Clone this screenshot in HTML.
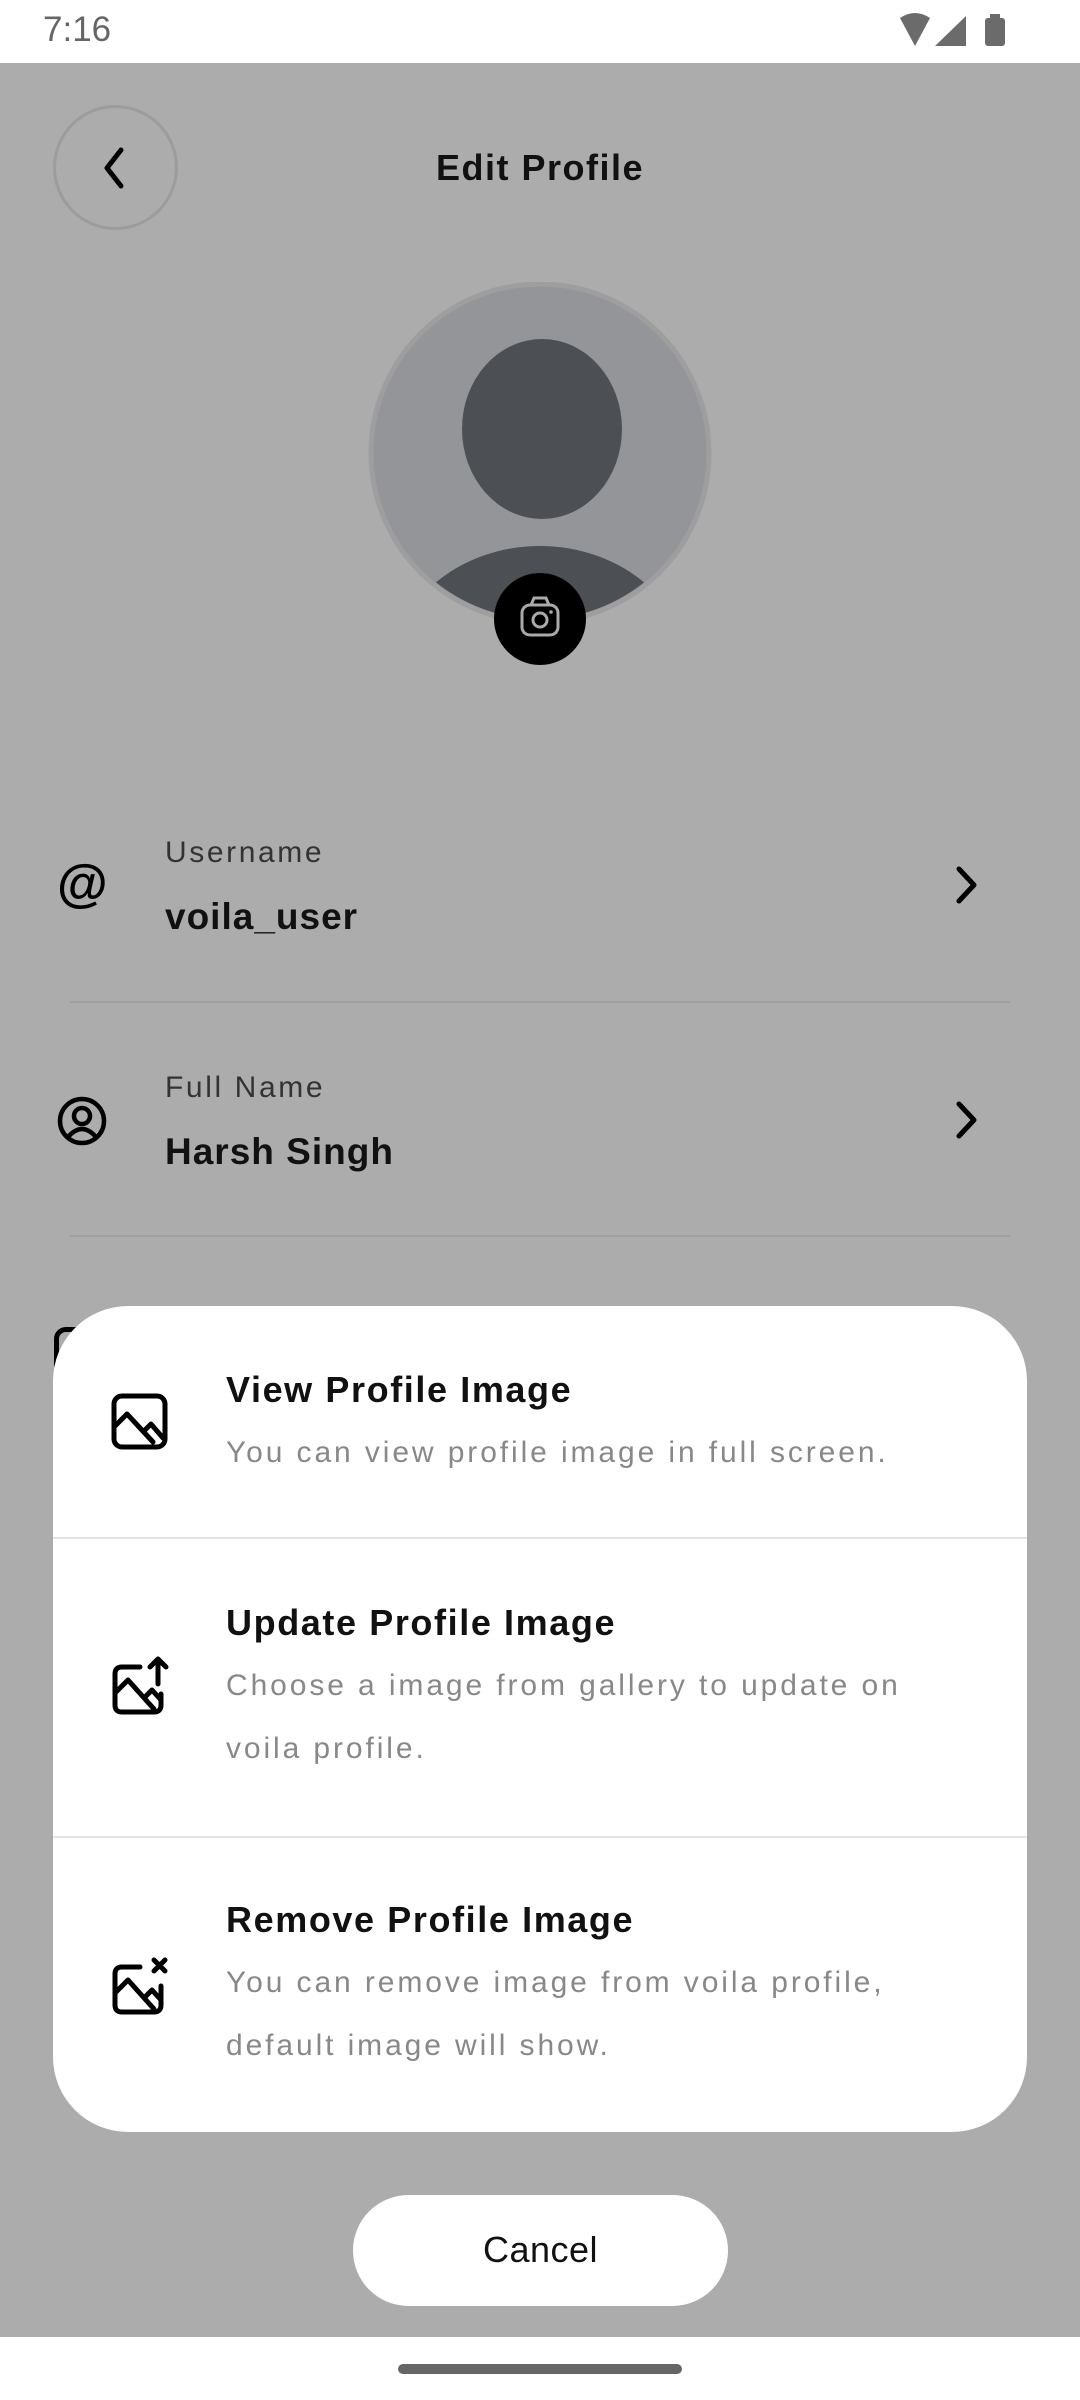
<!DOCTYPE html>
<html><head><meta charset="utf-8">
<style>
*{margin:0;padding:0;box-sizing:border-box}
html,body{width:1080px;height:2400px;overflow:hidden;background:#fff;font-family:"Liberation Sans",sans-serif}
.abs{position:absolute}
.t{position:absolute;white-space:nowrap}
.ti{font-size:36px;line-height:40px;color:#111;letter-spacing:1.6px;font-weight:bold}
.de{font-size:30px;line-height:34px;color:#888;letter-spacing:2.9px}
</style></head>
<body>
<div class="abs" style="left:0;top:0;width:1080px;height:63px;background:#fff"></div>
<div class="t" style="left:43px;top:11px;font-size:35px;color:#666;line-height:38px">7:16</div>
<svg class="abs" style="left:898px;top:12px" width="112" height="38" viewBox="0 0 112 38">
<path d="M2 6 Q17 -4 32 6 L17 34 Z" fill="#6b6b6b"/>
<path d="M68 4 L68 34 L37 34 Z" fill="#6b6b6b"/>
<rect x="87" y="6" width="20" height="28" rx="3" fill="#6b6b6b"/><rect x="92" y="2" width="10" height="5" fill="#6b6b6b"/>
</svg>

<div class="abs" style="left:0;top:63px;width:1080px;height:2274px;background:#acacac"></div>

<div class="abs" style="left:53px;top:105px;width:125px;height:125px;border-radius:50%;border:3px solid #9c9c9c"></div>
<svg class="abs" style="left:95px;top:145px" width="40" height="46" viewBox="0 0 40 46"><path d="M26 5 L12 23 L26 41" fill="none" stroke="#000" stroke-width="5" stroke-linecap="round" stroke-linejoin="round"/></svg>
<div class="t" style="left:0;width:1080px;text-align:center;top:148px;font-size:36px;line-height:40px;color:#111;letter-spacing:1.5px;font-weight:bold">Edit Profile</div>

<svg class="abs" style="left:368px;top:282px" width="344" height="400" viewBox="0 0 344 400">
<defs><clipPath id="c"><circle cx="172" cy="171" r="166"/></clipPath></defs>
<circle cx="172" cy="171" r="169" fill="#939598" stroke="#9e9e9e" stroke-width="5"/>
<g clip-path="url(#c)">
<ellipse cx="174" cy="147" rx="80" ry="90" fill="#4c5054"/>
<ellipse cx="172" cy="394" rx="150" ry="130" fill="#4c5054"/>
</g>
<circle cx="172" cy="337" r="46" fill="#000"/>
<rect x="154" y="323" width="36" height="30" rx="8" fill="none" stroke="#aaa" stroke-width="3"/>
<path d="M163 323 L166 316 L178 316 L181 323" fill="none" stroke="#aaa" stroke-width="3"/>
<circle cx="172" cy="338" r="7" fill="none" stroke="#aaa" stroke-width="3"/>
<circle cx="183" cy="330" r="1.8" fill="#aaa"/>
</svg>

<div class="t" style="left:57px;top:856px;font-size:52px;line-height:56px;color:#000;font-weight:bold">@</div>
<div class="t" style="left:165px;top:837px;font-size:30px;line-height:32px;color:#333;letter-spacing:2.6px">Username</div>
<div class="t" style="left:165px;top:897px;font-size:37px;line-height:40px;color:#111;letter-spacing:1px;font-weight:bold">voila_user</div>
<svg class="abs" style="left:950px;top:862px" width="34" height="46" viewBox="0 0 34 46"><path d="M9 7 L24 23 L9 39" fill="none" stroke="#000" stroke-width="5" stroke-linecap="round" stroke-linejoin="round"/></svg>
<div class="abs" style="left:70px;top:1001px;width:940px;height:2px;background:#9f9f9f"></div>

<svg class="abs" style="left:56px;top:1095px" width="52" height="52" viewBox="0 0 52 52">
<circle cx="26" cy="26" r="22" fill="none" stroke="#000" stroke-width="4.5"/>
<circle cx="26" cy="21" r="8" fill="none" stroke="#000" stroke-width="4.5"/>
<path d="M12 42 Q26 26 40 42" fill="none" stroke="#000" stroke-width="4.5"/>
</svg>
<div class="t" style="left:165px;top:1072px;font-size:30px;line-height:32px;color:#333;letter-spacing:2.6px">Full Name</div>
<div class="t" style="left:165px;top:1132px;font-size:37px;line-height:40px;color:#111;letter-spacing:1px;font-weight:bold">Harsh Singh</div>
<svg class="abs" style="left:950px;top:1097px" width="34" height="46" viewBox="0 0 34 46"><path d="M9 7 L24 23 L9 39" fill="none" stroke="#000" stroke-width="5" stroke-linecap="round" stroke-linejoin="round"/></svg>
<div class="abs" style="left:70px;top:1235px;width:940px;height:2px;background:#9f9f9f"></div>

<div class="abs" style="left:54px;top:1327px;width:50px;height:50px;border:5px solid #000;border-radius:12px"></div>

<div class="abs" style="left:53px;top:1306px;width:974px;height:826px;background:#fff;border-radius:75px;overflow:hidden">
<div class="abs" style="left:0;top:231px;width:974px;height:2px;background:#e4e4e4"></div>
<div class="abs" style="left:0;top:530px;width:974px;height:2px;background:#e4e4e4"></div>
</div>

<svg class="abs" style="left:110px;top:1392px" width="60" height="60" viewBox="0 0 60 60">
<rect x="4" y="4" width="51" height="51" rx="8" fill="none" stroke="#000" stroke-width="5"/>
<path d="M5 34 L17 22 L43 50 M35 38 L41 32 L53 46" fill="none" stroke="#000" stroke-width="5" stroke-linejoin="round" stroke-linecap="round"/>
</svg>
<div class="t ti" style="left:226px;top:1370px">View Profile Image</div>
<div class="t de" style="left:226px;top:1436px">You can view profile image in full screen.</div>

<svg class="abs" style="left:110px;top:1654px" width="64" height="64" viewBox="0 0 64 64">
<path d="M30 13 L12 13 Q5 13 5 20 L5 51 Q5 58 12 58 L44 58 Q51 58 51 51 L51 40" fill="none" stroke="#000" stroke-width="5" stroke-linecap="round"/>
<path d="M6 38 L18 26 L44 55 M36 42 L42 36 L51 46" fill="none" stroke="#000" stroke-width="5" stroke-linejoin="round" stroke-linecap="round"/>
<path d="M48 30 L48 5 M40 13 L48 5 L56 13" fill="none" stroke="#000" stroke-width="5" stroke-linecap="round" stroke-linejoin="round"/>
</svg>
<div class="t ti" style="left:226px;top:1603px">Update Profile Image</div>
<div class="t de" style="left:226px;top:1669px">Choose a image from gallery to update on</div>
<div class="t de" style="left:226px;top:1732px">voila profile.</div>

<svg class="abs" style="left:110px;top:1954px" width="64" height="64" viewBox="0 0 64 64">
<path d="M30 13 L12 13 Q5 13 5 20 L5 51 Q5 58 12 58 L44 58 Q51 58 51 51 L51 32" fill="none" stroke="#000" stroke-width="5" stroke-linecap="round"/>
<path d="M6 38 L18 26 L44 55 M36 42 L42 36 L51 46" fill="none" stroke="#000" stroke-width="5" stroke-linejoin="round" stroke-linecap="round"/>
<path d="M44 6 L55 17 M55 6 L44 17" fill="none" stroke="#000" stroke-width="5" stroke-linecap="round"/>
</svg>
<div class="t ti" style="left:226px;top:1900px">Remove Profile Image</div>
<div class="t de" style="left:226px;top:1966px">You can remove image from voila profile,</div>
<div class="t de" style="left:226px;top:2029px">default image will show.</div>

<div class="abs" style="left:353px;top:2195px;width:375px;height:111px;background:#fff;border-radius:56px"></div>
<div class="t" style="left:353px;width:375px;text-align:center;top:2230px;font-size:36px;line-height:40px;color:#111;letter-spacing:0.5px">Cancel</div>

<div class="abs" style="left:398px;top:2364px;width:284px;height:10px;background:#666;border-radius:5px"></div>
</body></html>
